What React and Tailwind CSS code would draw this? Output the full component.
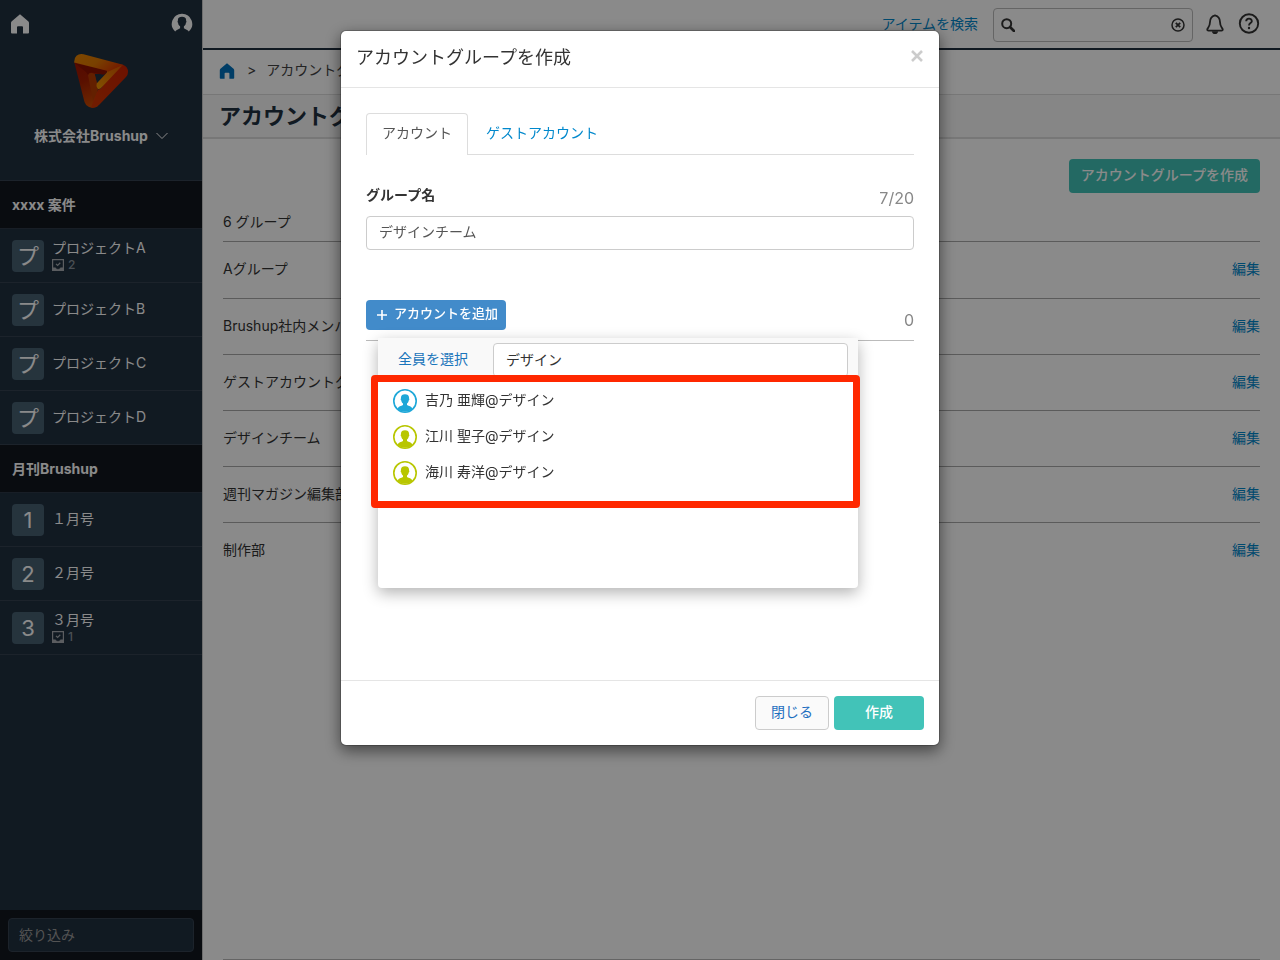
import clsx from 'clsx';

const sections = [
  {
    title: 'xxxx 案件',
    items: [
      { mark: 'プ', name: 'プロジェクトA', tasks: 2 },
      { mark: 'プ', name: 'プロジェクトB' },
      { mark: 'プ', name: 'プロジェクトC' },
      { mark: 'プ', name: 'プロジェクトD' },
    ],
  },
  {
    title: '月刊Brushup',
    items: [
      { mark: '1', name: '１月号' },
      { mark: '2', name: '２月号' },
      { mark: '3', name: '３月号', tasks: 1 },
    ],
  },
];

const groups = [
  'Aグループ',
  'Brushup社内メンバー',
  'ゲストアカウントグループ',
  'デザインチーム',
  '週刊マガジン編集部',
  '制作部',
];

const candidates = [
  { name: '吉乃 亜輝@デザイン', color: 'text-[#1da7d8]' },
  { name: '江川 聖子@デザイン', color: 'text-[#b8c600]' },
  { name: '海川 寿洋@デザイン', color: 'text-[#b8c600]' },
];

function HomeIcon({ className }) {
  return (
    <svg viewBox="0 0 18 20" fill="currentColor" className={className} aria-hidden="true">
      <path d="M9 0.3 17.2 7.2Q18 7.9 18 9V18.6Q18 19.6 17 19.6H12V13.2Q12 12.2 11 12.2H7Q6 12.2 6 13.2V19.6H1Q0 19.6 0 18.6V9Q0 7.9 0.8 7.2Z" />
    </svg>
  );
}

function UserIcon() {
  return (
    <svg viewBox="0 0 22 22" className="h-[22px] w-[22px]" aria-hidden="true">
      <path
        fill="#fff"
        d="M11 0.7A10.2 10.2 0 0 0 4.2 18.5C5 16.9 7.6 16.1 9.1 15.2V13.2C7.6 12.3 7.2 11 7.1 9.7C6.3 9.3 6.4 8.2 6.9 8C6.5 4.9 8.5 3.8 11 3.8S15.5 4.9 15.1 8C15.6 8.2 15.7 9.3 14.9 9.7C14.8 11 14.4 12.3 12.9 13.2V15.2C14.4 16.1 17 16.9 17.8 18.5A10.2 10.2 0 0 0 11 0.7Z"
      />
    </svg>
  );
}

function Logo() {
  return (
    <svg viewBox="0 0 54 54" className="h-[54px] w-[54px]" aria-hidden="true">
      <defs>
        <linearGradient id="logoTop" x1="0" y1="0" x2="1" y2="0.4">
          <stop offset="0" stopColor="#e88400" />
          <stop offset="0.55" stopColor="#e07800" />
          <stop offset="1" stopColor="#d83c00" />
        </linearGradient>
        <linearGradient id="logoLeft" x1="0.2" y1="0" x2="0.5" y2="1">
          <stop offset="0" stopColor="#a01400" />
          <stop offset="0.4" stopColor="#a41e00" />
          <stop offset="1" stopColor="#cc4c00" />
        </linearGradient>
        <linearGradient id="logoRight" x1="1" y1="0" x2="0.2" y2="1">
          <stop offset="0" stopColor="#c82000" />
          <stop offset="1" stopColor="#d03400" />
        </linearGradient>
        <linearGradient id="logoInner" x1="1" y1="0" x2="0.1" y2="1">
          <stop offset="0" stopColor="#d85400" />
          <stop offset="1" stopColor="#f09400" />
        </linearGradient>
      </defs>
      <path
        fill="url(#logoLeft)"
        fillRule="evenodd"
        d="M0.2 8 33.5 16 28.3 20 22.7 28.3 24 52Q20 55 15 53Q11.5 51.5 10.5 48ZM20.7 20 22.7 28.3 28.3 20Z"
      />
      <path fill="#b83c00" d="M14 21Q14.5 18.500 18 19L20.700 20 22.700 28.300Q21.800 32 24 35.300L19 47Z" />
      <path fill="#8c1200" d="M1 9.300 33 16.500Q33.500 19.500 29.500 20.800L18 18.600Q14.500 18 14 21L12 18Z" />
      <path fill="url(#logoRight)" d="M43 10.500 49 10.700Q54 12.500 54 18Q54 21 52 23L25 51Q21.500 54.500 17 53.600L24 35.300Q26 36 28 33Z" />
      <path fill="url(#logoInner)" d="M33 17 49 10.700 28 33Q25.500 36.200 23.500 34.500Q21.800 32.500 22.600 29.500L32 19.500Q33.500 18 33 17Z" />
      <path fill="url(#logoTop)" d="M0.100 8.500Q0 4 2.500 1.800Q5.200 -0.600 9.500 0.300L49 10.700 33.500 18Q33.500 17 32 16.600L0.100 8.500Z" />
    </svg>
  );
}

function TaskIcon() {
  return (
    <svg viewBox="0 0 12 12" fill="none" stroke="#a8adb2" className="h-3 w-3" aria-hidden="true">
      <path d="M0.600 0.600H11.400V11.400H0.600Z" strokeWidth="1.200" />
      <path d="M1 8.800H3.500Q4 10.400 6 10.400T8.500 8.800H11V11.200H1Z" fill="#a8adb2" strokeWidth="0.500" />
      <path d="M4 4.800 5.600 6.400 8.300 3.800" strokeWidth="1.200" />
    </svg>
  );
}

function Avatar({ className }) {
  return (
    <svg viewBox="0 0 24 24" className={clsx('h-6 w-6', className)} aria-hidden="true">
      <circle cx="12" cy="12" r="11.200" fill="#fff" stroke="currentColor" strokeWidth="1.600" />
      <path
        fill="currentColor"
        d="M12 5.300C9.200 5.300 7.600 6.700 8 9.600C7.400 9.900 7.600 11.200 8.300 11.500C8.500 12.900 9 13.900 10 14.600V16C8.200 17 5.400 17.300 4.500 19.700A10.800 10.800 0 0 0 19.500 19.700C18.600 17.300 15.800 17 14 16V14.600C15 13.900 15.500 12.900 15.700 11.500C16.400 11.200 16.600 9.900 16 9.600C16.400 6.700 14.800 5.300 12 5.300Z"
      />
    </svg>
  );
}

function Sidebar() {
  return (
    <aside className="flex w-[202px] shrink-0 flex-col bg-[#213040] text-white">
      <div className="h-[181px] border-b border-[#344150]">
        <div className="flex items-center justify-between pt-[13px] pr-[9px] pl-[11px]">
          <a href="#home" aria-label="ホーム">
            <HomeIcon className="h-5 w-[18px]" />
          </a>
          <button type="button" aria-label="プロフィール">
            <UserIcon />
          </button>
        </div>
        <div className="mt-[19px] flex flex-col items-center">
          <Logo />
          <button type="button" className="mt-[18px] flex items-center gap-2 text-sm leading-5 font-bold">
            株式会社Brushup
            <svg viewBox="0 0 12 8" fill="none" stroke="currentColor" className="h-2 w-3" aria-hidden="true">
              <path d="M0.500 1 6 6.500 11.500 1" />
            </svg>
          </button>
        </div>
      </div>

      <nav className="flex-1">
        {sections.map(({ title, items }) => (
          <div key={title}>
            <h2 className="flex h-12 items-center border-b border-[#2d3947] bg-[#11171e] px-3 text-sm font-bold">{title}</h2>
            <ul>
              {items.map(({ mark, name, tasks }) => (
                <li key={name} className="border-b border-[#344150]">
                  <a href="#project" className="flex h-[53px] items-center gap-2 px-3">
                    <span className="flex h-8 w-8 items-center justify-center rounded bg-[#476072] text-[22px] leading-8">{mark}</span>
                    <span className="pb-0.5">
                      <span className="block text-sm leading-5">{name}</span>
                      {tasks && (
                        <span className="flex items-center gap-1 text-xs leading-[14px] font-medium text-[#8a939b]">
                          <TaskIcon />
                          {tasks}
                        </span>
                      )}
                    </span>
                  </a>
                </li>
              ))}
            </ul>
          </div>
        ))}
      </nav>

      <div className="bg-[#11171e] p-2">
        <input
          type="text"
          aria-label="絞り込み"
          placeholder="絞り込み"
          className="block h-[34px] w-full rounded border border-[#344150] bg-[#213040] px-2.5 pb-0.5 text-sm placeholder:text-[#9a9a9a]"
        />
      </div>
    </aside>
  );
}

function Header() {
  return (
    <header className="flex h-[50px] items-center justify-end border-b-2 border-[#213040] pr-5">
      <a href="#search" className="mr-[15px] text-sm text-[#0088cc]">アイテムを検索</a>
      <div className="relative mt-0.5">
        <svg viewBox="0 0 14 14" fill="none" stroke="#333" className="absolute top-[10px] left-2 h-[14px] w-[14px]" aria-hidden="true">
          <circle cx="5.700" cy="5.700" r="4.500" strokeWidth="2" />
          <path d="M9 9 13 13" strokeWidth="2.600" strokeLinecap="round" />
        </svg>
        <input type="text" aria-label="検索" className="block h-[34px] w-[200px] rounded border border-[#bbb] px-7 text-sm" />
        <button type="button" aria-label="クリア" className="absolute top-[10px] right-2">
          <svg viewBox="0 0 14 14" fill="none" stroke="#333" className="h-[14px] w-[14px]" aria-hidden="true">
            <circle cx="7" cy="7" r="6" strokeWidth="1.500" />
            <path d="M4.800 4.800 9.200 9.200M9.200 4.800 4.800 9.200" strokeWidth="1.800" />
          </svg>
        </button>
      </div>
      <button type="button" aria-label="通知" className="ml-3">
        <svg viewBox="0 0 20 22" fill="none" stroke="#333" className="h-[22px] w-5" aria-hidden="true">
          <path d="M10 2.300C6.500 3.300 5 5.500 5 9C5 13 3.500 14 2.300 16.200Q2 17.600 3.500 17.600H16.500Q18 17.600 17.700 16.200C16.500 14 15 13 15 9C15 5.500 13.500 3.300 10 2.300Z" strokeWidth="1.800" strokeLinejoin="round" />
          <path d="M7 18.200A3 2.800 0 0 0 13 18.200Z" fill="#333" stroke="none" />
        </svg>
      </button>
      <button type="button" aria-label="ヘルプ" className="ml-[13px]">
        <svg viewBox="0 0 22 22" fill="none" stroke="#333" className="h-[22px] w-[22px]" aria-hidden="true">
          <circle cx="11" cy="10.500" r="9.200" strokeWidth="1.900" />
          <path d="M8.200 8.300C8.200 4.800 13.800 4.800 13.800 8.200C13.800 10.100 11 10.200 11 12.500" strokeWidth="1.900" />
          <circle cx="11" cy="15" r="1.200" fill="#333" stroke="none" />
        </svg>
      </button>
    </header>
  );
}

function GroupsPage() {
  return (
    <main className="flex flex-1 flex-col">
      <nav className="flex h-[45px] items-center gap-3 border-b border-[#ddd] pb-1 pl-4 text-sm text-[#444]">
        <a href="#home" aria-label="ホーム" className="pt-0.5 text-[#0072bc]">
          <HomeIcon className="h-4 w-4" />
        </a>
        <span className="-mr-0.5">&gt;</span>
        <span>アカウントグループ</span>
      </nav>
      <h1 className="h-11 border-b-2 border-[#ddd] bg-[#f7f7f7] pl-4 text-[22px] leading-[42px] font-bold text-[#213040]">
        アカウントグループ
      </h1>

      <div className="flex flex-1 flex-col px-5 pt-5">
        <button type="button" className="h-[34px] self-end rounded bg-[#42c3b8] px-3 pb-0.5 text-sm font-medium text-white">
          アカウントグループを作成
        </button>
        <table className="mt-[19px] w-full text-sm text-[#333]">
          <caption className="pb-[9px] text-left leading-5">6 グループ</caption>
          <tbody>
            {groups.map((group) => (
              <tr key={group} className="h-14 border-t border-[#a8a8a8] first:h-[57px]">
                <td className="pb-0.5">{group}</td>
                <td className="pb-0.5 text-right">
                  <a href="#edit" className="text-[#0088cc]">編集</a>
                </td>
              </tr>
            ))}
          </tbody>
        </table>
        <div className="mt-auto border-t border-[#bbb]" />
      </div>
    </main>
  );
}

function AccountPicker() {
  return (
    <div className="absolute top-[38px] right-14 left-3 h-[250px] rounded bg-white shadow-[0_5px_15px_rgba(0,0,0,0.3)]">
      <div className="flex h-11 items-start border-b border-[#bbb] bg-[#f9f9f9] px-2.5 pt-[5px]">
        <button type="button" className="h-[34px] w-[105px] pb-0.5 pl-2.5 text-left text-sm text-[#1a75bb]">全員を選択</button>
        <input
          type="text"
          aria-label="アカウントを検索"
          defaultValue="デザイン"
          className="h-[34px] min-w-0 flex-1 rounded border border-[#ccc] bg-white px-3 pb-0.5 text-sm text-[#333]"
        />
      </div>
      <ul className="pt-px">
        {candidates.map(({ name, color }) => (
          <li key={name}>
            <button type="button" className="flex h-9 w-full items-center gap-2 px-[15px] text-sm text-[#333]">
              <Avatar className={color} />
              <span className="pb-0.5">{name}</span>
            </button>
          </li>
        ))}
      </ul>
      <div className="pointer-events-none absolute top-[37px] -right-0.5 -left-[7px] h-[133px] rounded border-7 border-[#ff2800]" />
    </div>
  );
}

function CreateGroupModal() {
  return (
    <div className="fixed inset-0 flex items-start justify-center overflow-auto bg-black/46">
      <div
        role="dialog"
        aria-labelledby="modal-title"
        className="mt-[30px] w-[600px] rounded-md border border-black/20 bg-white bg-clip-padding shadow-[0_5px_15px_rgba(0,0,0,0.5)]"
      >
        <div className="flex h-[57px] items-start justify-between border-b border-[#e5e5e5] px-[15px] pt-[15px]">
          <h2 id="modal-title" className="text-lg leading-6 text-[#333]">アカウントグループを作成</h2>
          <button type="button" aria-label="閉じる" className="h-5 text-[#ccc]">
            <svg viewBox="0 0 14 14" fill="none" stroke="currentColor" className="h-[14px] w-[14px]" aria-hidden="true">
              <path d="M2 2 12 12M12 2 2 12" strokeWidth="2.600" />
            </svg>
          </button>
        </div>

        <div className="min-h-[592px] px-[25px] pt-[25px]">
          <div role="tablist" className="flex h-[42px] border-b border-[#ddd] text-sm">
            <button type="button" role="tab" aria-selected="true" className="-mb-px rounded-t border border-b-0 border-[#ddd] bg-white px-[15px] pb-1 text-[#555]">
              アカウント
            </button>
            <button type="button" role="tab" aria-selected="false" className="px-[18px] pb-0.5 text-[#0088cc]">
              ゲストアカウント
            </button>
          </div>

          <div className="mt-[30px] flex justify-between">
            <label htmlFor="group-name" className="text-sm leading-5 font-bold text-[#333]">グループ名</label>
            <span className="text-base leading-[26px] text-[#888]">7/20</span>
          </div>
          <input
            id="group-name"
            type="text"
            defaultValue="デザインチーム"
            className="mt-[5px] block h-[34px] w-full rounded border border-[#ccc] px-3 pb-1 text-sm text-[#555]"
          />

          <div className="relative mt-[50px] flex items-start justify-between border-b border-[#bbb] pb-2.5">
            <button type="button" className="flex h-[30px] items-center gap-1.5 rounded bg-[#428bca] pr-2 pl-2.5 text-[13px] font-medium text-white">
              <svg viewBox="0 0 12 12" fill="none" stroke="currentColor" className="h-3 w-3" aria-hidden="true">
                <path d="M6 1V11M1 6H11" strokeWidth="1.600" />
              </svg>
              <span className="pb-0.5">アカウントを追加</span>
            </button>
            <span className="self-end text-base leading-5 text-[#888]">0</span>
            <AccountPicker />
          </div>
        </div>

        <div className="flex justify-end gap-[5px] border-t border-[#e5e5e5] p-[15px] text-sm">
          <button type="button" className="h-[34px] rounded border border-[#ccc] bg-[#fafafa] px-[15px] pb-0.5 text-[#1f6fc0]">閉じる</button>
          <button type="button" className="h-[34px] w-[90px] rounded bg-[#42c3b8] pb-0.5 font-medium text-white">作成</button>
        </div>
      </div>
    </div>
  );
}

export default function App() {
  return (
    <div className="flex min-h-screen bg-white font-['Inter','Noto_Sans_CJK_JP',sans-serif]">
      <Sidebar />
      <div className="flex min-w-0 flex-1 flex-col border-l border-[#ccc]">
        <Header />
        <GroupsPage />
      </div>
      <CreateGroupModal />
    </div>
  );
}
